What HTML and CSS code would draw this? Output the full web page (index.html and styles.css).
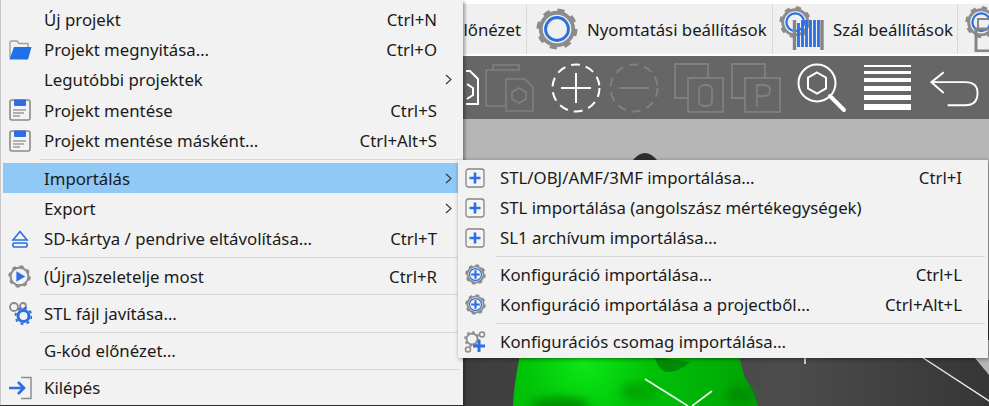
FILE: index.html
```html
<!DOCTYPE html>
<html lang="hu">
<head>
    <meta charset="UTF-8">
    <meta name="viewport" content="width=device-width, initial-scale=1.0">
    <title>Importálás menü</title>
    <link rel="stylesheet" href="styles.css">
</head>
<body>

<svg class="defs" width="0" height="0">
    <symbol id="gear" viewBox="0 0 44 44">
        <circle cx="22" cy="22" r="17" fill="none" stroke="#8c8c8c" stroke-width="4"/>
        <circle cx="22" cy="22" r="19.500" fill="none" stroke="#8c8c8c" stroke-width="4" stroke-dasharray="7.300 8"/>
    </symbol>
    <symbol id="save" viewBox="0 0 22 22">
        <rect x="1" y="1" width="20" height="20" rx="2" fill="#f4f4f4" stroke="#8a8a8a" stroke-width="1.600"/>
        <rect x="5" y="0.500" width="12" height="6.500" rx="1" fill="#2b6fe0"/>
        <path d="M4 11H17M4 14H15M4 17H11" stroke="#9a9a9a" stroke-width="1.400"/>
    </symbol>
    <symbol id="boxplus" viewBox="0 0 20 20">
        <rect x="1" y="1" width="18" height="18" rx="2.500" fill="#f4f4f4" stroke="#858585" stroke-width="1.300"/>
        <path d="M10 4.500V15.500M4.500 10H15.500" stroke="#2b6fe0" stroke-width="2.600"/>
    </symbol>
    <symbol id="confplus" viewBox="0 0 44 44">
        <use href="#gear"/>
        <circle cx="22" cy="22" r="12.500" fill="#f4f4f4" stroke="#2b6fe0" stroke-width="2.600"/>
        <path d="M22 13V31M13 22H31" stroke="#2b6fe0" stroke-width="4.500"/>
    </symbol>
    <symbol id="chevron" viewBox="0 0 7 11">
        <path d="M1 1L6 5.500L1 10" fill="none" stroke="#333" stroke-width="1.100"/>
    </symbol>
</svg>

<div class="app">
    <div class="tabs">
        <div class="tab tab-first"><span>előnézet</span></div>
        <div class="tab tab-print">
            <svg class="tab-icon" width="42" height="42" viewBox="0 0 44 44">
                <use href="#gear"/>
                <circle cx="22" cy="22" r="12" fill="#f0f0f0" stroke="#2b6fe0" stroke-width="3"/>
            </svg>
            <span>Nyomtatási beállítások</span>
        </div>
        <div class="tab tab-filament">
            <svg class="tab-icon" width="46" height="46" viewBox="0 0 46 46">
                <g transform="scale(.74)"><use href="#gear" width="44" height="44"/>
                <circle cx="22" cy="22" r="12" fill="#f0f0f0" stroke="#2b6fe0" stroke-width="3"/></g>
                <path d="M15.500 14V44M43 14V44" stroke="#858585" stroke-width="3.400"/>
                <path d="M19.500 17V41M23.500 14V41M27.500 14V41M31.500 14V41M35.500 14V41M39.500 14V41" stroke="#2b6fe0" stroke-width="2.800"/>
            </svg>
            <span>Szál beállítások</span>
        </div>
        <div class="tab tab-printer">
            <svg class="tab-icon" width="46" height="46" viewBox="0 0 46 46">
                <g transform="scale(.74)"><use href="#gear" width="44" height="44"/>
                <circle cx="22" cy="22" r="12" fill="#f0f0f0" stroke="#2b6fe0" stroke-width="3"/></g>
                <rect x="13" y="13" width="16" height="10" fill="none" stroke="#858585" stroke-width="2"/>
                <rect x="11" y="23" width="22" height="22" fill="none" stroke="#858585" stroke-width="3"/>
            </svg>
        </div>
    </div>

    <div class="toolbar">
        <svg class="tool tool-file" width="14" height="36" viewBox="0 0 14 36">
            <path d="M-8 1H4L12 9V34H-8Z" fill="none" stroke="#fff" stroke-width="2"/>
            <path d="M1 14L7 18V25L1 29" fill="none" stroke="#fff" stroke-width="2"/>
        </svg>
        <svg class="tool tool-paste" width="50" height="50" viewBox="0 0 50 50">
            <path d="M20 7H34V2H8V7H1V43H20M8 2V7H34" fill="none" stroke="#808080" stroke-width="1.600"/>
            <path d="M21 16H40L48 24V48H21Z" fill="none" stroke="#808080" stroke-width="1.600"/>
            <path d="M34 25L41 29V36L34 40L27 36V29Z" fill="none" stroke="#808080" stroke-width="1.600"/>
        </svg>
        <svg class="tool tool-add" width="50" height="50" viewBox="0 0 50 50">
            <circle cx="25" cy="25" r="23.500" fill="none" stroke="#fff" stroke-width="2" stroke-dasharray="9 6"/>
            <path d="M25 10V40M10 25H40" stroke="#fff" stroke-width="2"/>
        </svg>
        <svg class="tool tool-remove" width="50" height="50" viewBox="0 0 50 50">
            <circle cx="25" cy="25" r="23.500" fill="none" stroke="#808080" stroke-width="2" stroke-dasharray="9 6"/>
            <path d="M10 25H40" stroke="#808080" stroke-width="2"/>
        </svg>
        <svg class="tool tool-zero" width="50" height="50" viewBox="0 0 50 50">
            <path d="M14 35H1V1H34V15" fill="none" stroke="#808080" stroke-width="1.800"/>
            <rect x="14" y="15" width="35" height="34" fill="none" stroke="#808080" stroke-width="1.800"/>
            <rect x="25" y="22" width="13" height="21" rx="5" fill="none" stroke="#808080" stroke-width="1.800"/>
        </svg>
        <svg class="tool tool-p" width="50" height="50" viewBox="0 0 50 50">
            <path d="M14 35H1V1H34V15" fill="none" stroke="#808080" stroke-width="1.800"/>
            <rect x="14" y="15" width="35" height="34" fill="none" stroke="#808080" stroke-width="1.800"/>
            <path d="M26 44V22H33Q39 22 39 27.500Q39 33 33 33H26" fill="none" stroke="#808080" stroke-width="1.800"/>
        </svg>
        <svg class="tool tool-search" width="50" height="50" viewBox="0 0 50 50">
            <circle cx="20" cy="20" r="18.500" fill="none" stroke="#fff" stroke-width="2"/>
            <path d="M20 9.500L29 14.700V25.300L20 30.500L11 25.300V14.700Z" fill="none" stroke="#fff" stroke-width="2"/>
            <path d="M33 33L47 47" stroke="#fff" stroke-width="4" stroke-linecap="round"/>
        </svg>
        <div class="tool tool-lines">
            <i class="ln ln1"></i><i class="ln ln2"></i><i class="ln ln3"></i><i class="ln ln4"></i><i class="ln ln4"></i><i class="ln ln5"></i>
        </div>
        <svg class="tool tool-undo" width="49" height="36" viewBox="0 0 50 36">
            <path d="M14 1L1.500 11L14 22M1.500 11H36Q48.500 11 48.500 22Q48.500 34.500 36 34.500H18" fill="none" stroke="#fff" stroke-width="2"/>
        </svg>
    </div>

    <div class="viewport">
        <svg class="scene" width="989" height="287" viewBox="0 119 989 287">
            <defs>
                <linearGradient id="floor" x1="0" x2="1" y1="0" y2="0">
                    <stop offset=".45" stop-color="#3d3d3d"/>
                    <stop offset=".8" stop-color="#4c4c4c"/>
                    <stop offset="1" stop-color="#363636"/>
                </linearGradient>
                <radialGradient id="green" cx="585" cy="362" r="175" gradientUnits="userSpaceOnUse">
                    <stop offset="0" stop-color="#0ce816"/>
                    <stop offset=".35" stop-color="#00c408"/>
                    <stop offset="1" stop-color="#00a205"/>
                </radialGradient>
                <filter id="soft"><feGaussianBlur stdDeviation="5"/></filter>
            </defs>
            <rect x="0" y="119" width="989" height="287" fill="#b6b6b6"/>
            <rect x="0" y="300" width="989" height="106" fill="url(#floor)"/>
            <path d="M960 340L989 340V375Z" fill="#b6b6b6"/>
            <path d="M633 160Q645 146 657 160Z" fill="#2e2e2e"/>
            <path d="M519 340H735Q741 365 745 378Q754 392 758 406H513Q514 385 519 360Z" fill="url(#green)"/>
            <g filter="url(#soft)">
                <ellipse cx="560" cy="406" rx="30" ry="9" fill="#009005"/>
                <ellipse cx="740" cy="395" rx="14" ry="10" fill="#009005"/>
                <ellipse cx="640" cy="392" rx="20" ry="10" fill="#00a806"/>
            </g>
            <path d="M655 358Q680 360 690 362Q680 372 665 372Q658 368 655 358Z" fill="#008a06"/>
            <path d="M645 379L688 406M712 391L692 406" stroke="#eef5ee" stroke-width="1.600"/>
            <path d="M805 350V364" stroke="#eee" stroke-width="1.600"/>
            <path d="M911 350L997 406" stroke="#e8e8e8" stroke-width="1.400"/>
        </svg>
    </div>

    <!-- bal oldali fomenu -->
    <div class="menu menu-main">
        <div class="row"><span class="ico"></span><span class="label">Új projekt</span><span class="key">Ctrl+N</span></div>
        <div class="row">
            <span class="ico">
                <svg width="24" height="22" viewBox="0 0 24 22">
                    <path d="M2 19V3.500Q2 2 3.500 2H9L11 4.500H20V8" fill="none" stroke="#a0a0a0" stroke-width="1.400"/>
                    <path d="M6 8H23.500L20 20.500H1.500Z" fill="#1f6fe8"/>
                </svg>
            </span>
            <span class="label">Projekt megnyitása…</span><span class="key">Ctrl+O</span>
        </div>
        <div class="row"><span class="ico"></span><span class="label">Legutóbbi projektek</span><svg class="arrow" width="7" height="11"><use href="#chevron"/></svg></div>
        <div class="row"><span class="ico"><svg width="22" height="22"><use href="#save"/></svg></span><span class="label">Projekt mentése</span><span class="key">Ctrl+S</span></div>
        <div class="row"><span class="ico"><svg width="22" height="22"><use href="#save"/></svg></span><span class="label">Projekt mentése másként…</span><span class="key">Ctrl+Alt+S</span></div>
        <div class="sep sep-first"></div>
        <div class="row row-active"><span class="ico"></span><span class="label">Importálás</span><svg class="arrow" width="7" height="11"><use href="#chevron"/></svg></div>
        <div class="row"><span class="ico"></span><span class="label">Export</span><svg class="arrow" width="7" height="11"><use href="#chevron"/></svg></div>
        <div class="row">
            <span class="ico">
                <svg width="18" height="18" viewBox="0 0 18 18">
                    <path d="M9 1.500L16 10H2Z" fill="none" stroke="#2b6fe0" stroke-width="1.600"/>
                    <rect x="2" y="13" width="14" height="4" rx="1" fill="none" stroke="#2b6fe0" stroke-width="1.600"/>
                </svg>
            </span>
            <span class="label">SD-kártya / pendrive eltávolítása…</span><span class="key">Ctrl+T</span>
        </div>
        <div class="sep"></div>
        <div class="row">
            <span class="ico">
                <svg width="23" height="23" viewBox="0 0 44 44">
                    <use href="#gear"/>
                    <circle cx="22" cy="22" r="14" fill="#f2f2f2"/>
                    <path d="M16 12L33 22L16 32Z" fill="#2b6fe0"/>
                </svg>
            </span>
            <span class="label">(Újra)szeletelje most</span><span class="key">Ctrl+R</span>
        </div>
        <div class="sep"></div>
        <div class="row">
            <span class="ico">
                <svg width="24" height="24" viewBox="0 0 24 24">
                    <circle cx="6" cy="6" r="4" fill="none" stroke="#8a8a8a" stroke-width="1.800"/>
                    <circle cx="15" cy="5" r="3" fill="none" stroke="#8a8a8a" stroke-width="1.800"/>
                    <circle cx="15.500" cy="15" r="5.500" fill="none" stroke="#2b6fe0" stroke-width="3"/>
                    <circle cx="15.500" cy="15" r="8" fill="none" stroke="#2b6fe0" stroke-width="2" stroke-dasharray="3 3.300"/>
                </svg>
            </span>
            <span class="label">STL fájl javítása…</span>
        </div>
        <div class="sep"></div>
        <div class="row"><span class="ico"></span><span class="label">G-kód előnézet…</span></div>
        <div class="sep"></div>
        <div class="row">
            <span class="ico">
                <svg width="24" height="24" viewBox="0 0 24 24">
                    <path d="M13 1.500H23V22.500H13" fill="none" stroke="#8a8a8a" stroke-width="1.400"/>
                    <path d="M1 12H15M10 6L16 12L10 18" fill="none" stroke="#2b6fe0" stroke-width="2.600"/>
                </svg>
            </span>
            <span class="label">Kilépés</span>
        </div>
    </div>

    <!-- almenu -->
    <div class="menu menu-sub">
        <div class="row"><span class="ico"><svg width="20" height="20"><use href="#boxplus"/></svg></span><span class="label">STL/OBJ/AMF/3MF importálása…</span><span class="key">Ctrl+I</span></div>
        <div class="row"><span class="ico"><svg width="20" height="20"><use href="#boxplus"/></svg></span><span class="label">STL importálása (angolszász mértékegységek)</span></div>
        <div class="row"><span class="ico"><svg width="20" height="20"><use href="#boxplus"/></svg></span><span class="label">SL1 archívum importálása…</span></div>
        <div class="sep"></div>
        <div class="row"><span class="ico"><svg width="21" height="21"><use href="#confplus"/></svg></span><span class="label">Konfiguráció importálása…</span><span class="key">Ctrl+L</span></div>
        <div class="row"><span class="ico"><svg width="21" height="21"><use href="#confplus"/></svg></span><span class="label">Konfiguráció importálása a projectből…</span><span class="key">Ctrl+Alt+L</span></div>
        <div class="sep"></div>
        <div class="row">
            <span class="ico">
                <svg width="22" height="22" viewBox="0 0 22 22">
                    <circle cx="8" cy="8" r="5.500" fill="none" stroke="#8a8a8a" stroke-width="1.800"/>
                    <circle cx="8" cy="8" r="7" fill="none" stroke="#8a8a8a" stroke-width="1.600" stroke-dasharray="2.500 3"/>
                    <circle cx="18" cy="3.500" r="2.500" fill="none" stroke="#8a8a8a" stroke-width="1.500"/>
                    <circle cx="4" cy="18.500" r="2.500" fill="none" stroke="#8a8a8a" stroke-width="1.500"/>
                    <path d="M15 9V21M9 15H21" stroke="#2b6fe0" stroke-width="3"/>
                </svg>
            </span>
            <span class="label">Konfigurációs csomag importálása…</span>
        </div>
    </div>
</div>

</body>
</html>
```

FILE: styles.css
```css
body {
    margin: 0;
    background-color: #fff;
    font-family: "Noto Sans", "Open Sans", sans-serif;
    color: #1a1a1a;
}

.defs {
    position: absolute;
}

.app {
    position: relative;
    width: 989px;
    height: 406px;
    padding-top: 4px;
    box-sizing: border-box;
    overflow: hidden;
}

/* felso fulek */
.tabs {
    display: flex;
    height: 50px;
    background-color: #f0f0f0;
    border-bottom: 2px solid #fff;
    box-sizing: content-box;
    font-size: 16.8px;
}

.tab {
    display: flex;
    align-items: center;
    flex: none;
    border-right: 1px solid #d9d9d9;
    box-sizing: border-box;
}

.tab-first {
    width: 527px;
    justify-content: flex-end;
    padding-right: 5px;
}

.tab-print {
    width: 246px;
    padding-left: 9px;
    gap: 9px;
}

.tab-filament {
    width: 185px;
    padding-left: 6px;
    gap: 8px;
}

.tab-printer {
    border-right: none;
    padding-left: 7px;
}

.tab-icon {
    flex: none;
}

/* eszkoztar */
.toolbar {
    display: flex;
    align-items: center;
    height: 63px;
    background-color: #666;
    padding-left: 466px;
}

.tool {
    flex: none;
}

.tool-paste {
    margin-left: 5px;
}

.tool-add {
    margin-left: 16px;
}

.tool-remove {
    margin-left: 8px;
}

.tool-zero {
    margin-left: 15px;
}

.tool-p {
    margin-left: 7px;
}

.tool-search {
    margin-left: 16px;
}

.tool-lines {
    display: flex;
    flex-direction: column;
    justify-content: space-between;
    width: 47px;
    height: 46px;
    margin-left: 17px;
}

.ln {
    display: block;
    background-color: #fff;
}

.ln1 {
    height: 2px;
}

.ln2 {
    height: 3px;
}

.ln3 {
    height: 4px;
}

.ln4 {
    height: 5px;
}

.ln5 {
    height: 6px;
}

.tool-undo {
    margin-left: 19px;
    margin-top: 3px;
}

.viewport {
    height: 287px;
}

.scene {
    display: block;
}

/* menuk */
.menu {
    position: absolute;
    background-color: #f2f2f2;
    box-sizing: border-box;
    font-size: 16.8px;
}

.menu-main {
    left: 0;
    top: 0;
    width: 463px;
    height: 405px;
    padding: 4px 0 0 2px;
    border-left: 1px solid #c8c8c8;
    box-shadow: 2px 2px 3px rgba(0, 0, 0, 0.35);
}

.menu-sub {
    left: 458px;
    top: 160px;
    width: 530px;
    height: 198px;
    padding-top: 2.500px;
    box-shadow: 1px 1px 4px rgba(0, 0, 0, 0.45);
}

.row {
    display: flex;
    align-items: center;
    height: 30.400px;
    padding-right: 26px;
}

.row-active {
    background-color: #90c8f6;
}

.ico {
    display: flex;
    align-items: center;
    justify-content: center;
    flex: none;
    width: 33px;
    margin-right: 8px;
}

.menu-sub .row {
    height: 30px;
}

.menu-sub .ico {
    width: 34px;
    margin-right: 8px;
}

.label {
    flex: 1;
    white-space: nowrap;
}

.key {
    white-space: nowrap;
}

.arrow {
    margin-right: -15px;
}

.sep {
    height: 1px;
    margin: 2.950px 4px 2.950px 37px;
    background-color: #d8d8d8;
}

.sep-first {
    margin-top: 3px;
    margin-bottom: 3px;
}

.menu-sub .sep {
    margin: 3px 3px 3px 38px;
}
```
